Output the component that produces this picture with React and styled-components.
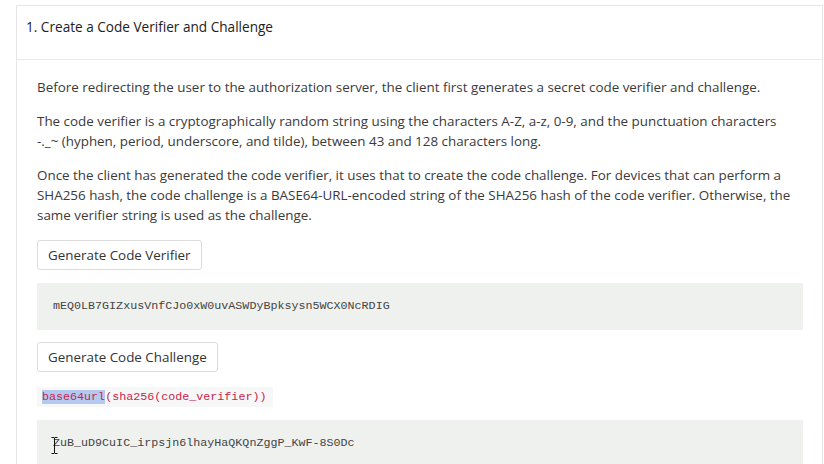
import React from "react";
import styled, { createGlobalStyle } from "styled-components";

const GlobalStyle = createGlobalStyle`
  html, body {
    margin: 0;
    padding: 0;
    background: #ffffff;
  }
  body {
    font-family: "Open Sans", Lato, "Liberation Sans", sans-serif;
    color: #333333;
  }
`;

const Page = styled.div`
  padding: 5px 1px 0 16px;
  height: 464px;
  overflow: hidden;
  box-sizing: border-box;
`;

const Card = styled.section`
  border: 1px solid #e6e6e6;
  border-bottom: none;
  background: #ffffff;
`;

const CardHeader = styled.header`
  height: 54px;
  box-sizing: border-box;
  padding: 12px 9px;
  border-bottom: 1px solid #e9e9e9;
  font-size: 13.6px;
  line-height: 18px;
  font-weight: 500;
  color: #222;
`;

const CardBody = styled.div`
  padding: 17px 19px 0 20px;
`;

const Para = styled.p`
  margin: 0 0 14px;
  padding-right: 4px;
  font-size: 13.4px;
  line-height: 20px;
  color: #3a3a3a;
`;

const Button = styled.button`
  display: block;
  height: 30px;
  padding: 0 10px;
  margin-top: ${(p) => p.$top || 0}px;
  background: #ffffff;
  border: 1px solid #dcdcdc;
  border-radius: 3px;
  font-family: "Open Sans", Lato, "Liberation Sans", sans-serif;
  font-size: 13.4px;
  color: #333;
  cursor: pointer;
`;

const CodeBlock = styled.pre`
  position: relative;
  margin: ${(p) => p.$top || 13}px 0 0;
  padding: 16px 16px;
  min-height: ${(p) => p.$min || 15}px;
  background: #eff1ee;
  font-family: "Liberation Mono", "Courier New", monospace;
  font-size: 11.7px;
  line-height: 15px;
  color: #444;
`;

const InlineCode = styled.code`
  display: inline-block;
  margin-top: 15px;
  padding: 0 7px 0 5px;
  height: 20px;
  line-height: 20px;
  background: #f7f7f7;
  font-family: "Liberation Mono", "Courier New", monospace;
  font-size: 11.7px;
  color: #c7254e;
`;

const Selected = styled.span`
  background: #b3c9ef;
`;

const Cursor = styled.svg`
  position: absolute;
  left: 14px;
  top: 17px;
`;

export default function App() {
  return (
    <>
      <GlobalStyle />
      <Page>
        <Card>
          <CardHeader>1. Create a Code Verifier and Challenge</CardHeader>
          <CardBody>
            <Para>
              Before redirecting the user to the authorization server, the client first
              generates a secret code verifier and challenge.
            </Para>
            <Para>
              The code verifier is a cryptographically random string using the characters
              A-Z, a-z, 0-9, and the punctuation characters -._~ (hyphen, period,
              underscore, and tilde), between 43 and 128 characters long.
            </Para>
            <Para>
              Once the client has generated the code verifier, it uses that to create the
              code challenge. For devices that can perform a SHA256 hash, the code
              challenge is a BASE64-URL-encoded string of the SHA256 hash of the code
              verifier. Otherwise, the same verifier string is used as the challenge.
            </Para>
            <Button $top={15}>Generate Code Verifier</Button>
            <CodeBlock>mEQ0LB7GIZxusVnfCJo0xW0uvASWDyBpksysn5WCX0NcRDIG</CodeBlock>
            <Button $top={12}>Generate Code Challenge</Button>
            <InlineCode>
              <Selected>base64url</Selected>(sha256(code_verifier))
            </InlineCode>
            <CodeBlock $top={13} $min={30}>
              ZuB_uD9CuIC_irpsjn6lhayHaQKQnZggP_KwF-8S0Dc
              <Cursor width="7" height="17" viewBox="0 0 7 17">
                <path
                  d="M0.5 0.5h2.5l0.5 0.5l0.5-0.5h2.5M3.5 1v15M0.5 16.5h2.5l0.5-0.5l0.5 0.5h2.5"
                  fill="none"
                  stroke="#111"
                  strokeWidth="1"
                />
              </Cursor>
            </CodeBlock>
          </CardBody>
        </Card>
      </Page>
    </>
  );
}
